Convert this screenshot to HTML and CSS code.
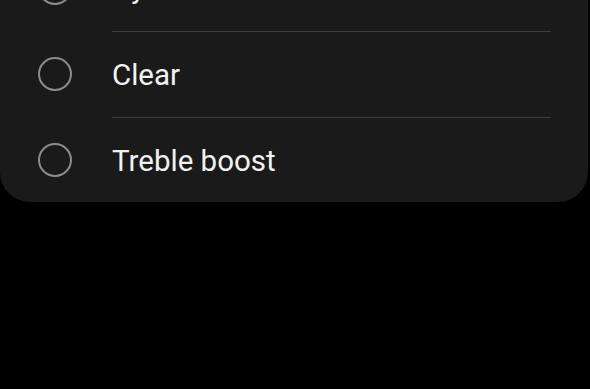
FILE: index.html
```html
<!DOCTYPE html>
<html lang="en">
<head>
  <meta charset="UTF-8">
  <meta name="viewport" content="width=device-width, initial-scale=1.0">
  <title>Equalizer</title>
  <link rel="stylesheet" href="styles.css">
</head>
<body>
  <div class="eq-card">
    <div class="eq-item">
      <span class="radio"></span>
      <div class="label">Dynamic</div>
    </div>
    <div class="eq-item">
      <span class="radio"></span>
      <div class="label divided">Clear</div>
    </div>
    <div class="eq-item last">
      <span class="radio"></span>
      <div class="label divided">Treble boost</div>
    </div>
  </div>
</body>
</html>
```
FILE: styles.css
```css
* {
  box-sizing: border-box;
}

html, body {
  margin: 0;
  height: 100%;
  background-color: #000;
  overflow: hidden;
}

body {
  font-family: Roboto, "Noto Sans", sans-serif;
  color: #f2f2f2;
}

.eq-card {
  width: 588px;
  margin-top: -55px;
  background-color: #1a1a1a;
  border-radius: 0 0 30px 30px;
}

.eq-item {
  display: flex;
  align-items: stretch;
  height: 86px;
  padding-left: 38px;
}

.eq-item.last {
  height: 85px;
}

.radio {
  align-self: center;
  flex: none;
  width: 34px;
  height: 34px;
  margin-right: 40px;
  border: 2px solid #8c8c8c;
  border-radius: 50%;
}

.label {
  flex: 1;
  display: flex;
  align-items: center;
  margin-right: 37px;
  font-size: 29.5px;
}

.eq-item.last .label {
  padding-top: 1px;
}

.label.divided {
  border-top: 1px solid #3c3c3c;
}
```
